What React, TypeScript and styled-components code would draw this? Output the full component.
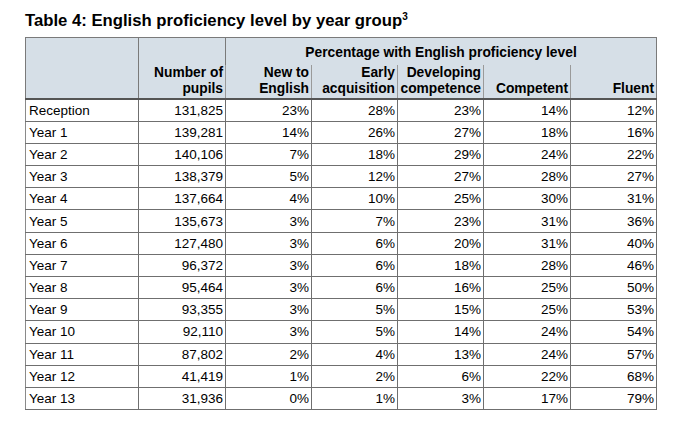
import React from 'react';
import styled, { createGlobalStyle } from 'styled-components';

const GlobalStyle = createGlobalStyle`
  html, body {
    margin: 0;
    padding: 0;
    background: #ffffff;
  }
  body {
    font-family: "Liberation Sans", Arial, sans-serif;
    color: #000;
  }
`;

const Page = styled.div`
  width: 675px;
  height: 430px;
  padding: 11px 0 0 25px;
  box-sizing: border-box;
`;

const Title = styled.h1`
  margin: 0 0 7px 0;
  font-size: 16.7px;
  font-weight: bold;
  line-height: 19px;

  sup {
    font-size: 10px;
    line-height: 0;
    vertical-align: 6px;
  }
`;

const Table = styled.table`
  border-collapse: collapse;
  table-layout: fixed;
  width: 632px;
  font-size: 13.5px;
  border: 1px solid #7a7a7a;
`;

const HeadCell = styled.th<{ $sub?: boolean; $first?: boolean }>`
  background: #d6dfe7;
  font-weight: bold;
  font-size: 13.8px;
  text-align: ${p => (p.$sub ? 'center' : 'right')};
  vertical-align: ${p => (p.$sub ? 'middle' : 'bottom')};
  padding: ${p => (p.$sub ? '3px 2px 0' : '0 2px 2px')};
  line-height: 15.5px;
  border-left: 1px solid ${p => (p.$first ? '#7a7a7a' : '#9a9a9a')};
  border-bottom: 2px solid #555;
  height: ${p => (p.$sub ? '24px' : 'auto')};
`;

const SubHeadRow = styled.tr`
  th {
    border-left: 1px solid #9a9a9a;
  }
`;

const TopHeadCell = styled(HeadCell)`
  border-bottom: none;
`;

const Row = styled.tr`
  height: 22.2px;
`;

const Cell = styled.td<{ $label?: boolean }>`
  padding: 0 2px 0 3px;
  text-align: ${p => (p.$label ? 'left' : 'right')};
  border: 1px solid #6f6f6f;
  border-left-color: #8a8a8a;
  line-height: 15px;
  white-space: nowrap;
`;

const rows: [string, string, string, string, string, string, string][] = [
  ['Reception', '131,825', '23%', '28%', '23%', '14%', '12%'],
  ['Year 1', '139,281', '14%', '26%', '27%', '18%', '16%'],
  ['Year 2', '140,106', '7%', '18%', '29%', '24%', '22%'],
  ['Year 3', '138,379', '5%', '12%', '27%', '28%', '27%'],
  ['Year 4', '137,664', '4%', '10%', '25%', '30%', '31%'],
  ['Year 5', '135,673', '3%', '7%', '23%', '31%', '36%'],
  ['Year 6', '127,480', '3%', '6%', '20%', '31%', '40%'],
  ['Year 7', '96,372', '3%', '6%', '18%', '28%', '46%'],
  ['Year 8', '95,464', '3%', '6%', '16%', '25%', '50%'],
  ['Year 9', '93,355', '3%', '5%', '15%', '25%', '53%'],
  ['Year 10', '92,110', '3%', '5%', '14%', '24%', '54%'],
  ['Year 11', '87,802', '2%', '4%', '13%', '24%', '57%'],
  ['Year 12', '41,419', '1%', '2%', '6%', '22%', '68%'],
  ['Year 13', '31,936', '0%', '1%', '3%', '17%', '79%'],
];

const widths = [113, 87, 86, 86, 86, 87, 86];

export default function App() {
  return (
    <Page>
      <GlobalStyle />
      <Title>
        Table 4: English proficiency level by year group<sup>3</sup>
      </Title>
      <Table>
        <colgroup>
          {widths.map((w, i) => (
            <col key={i} style={{ width: w }} />
          ))}
        </colgroup>
        <thead>
          <tr>
            <HeadCell $first rowSpan={2} />
            <HeadCell $first rowSpan={2}>
              Number of
              <br />
              pupils
            </HeadCell>
            <TopHeadCell $sub $first colSpan={5}>
              Percentage with English proficiency level
            </TopHeadCell>
          </tr>
          <SubHeadRow>
            <HeadCell>
              New to
              <br />
              English
            </HeadCell>
            <HeadCell>
              Early
              <br />
              acquisition
            </HeadCell>
            <HeadCell>
              Developing
              <br />
              competence
            </HeadCell>
            <HeadCell>Competent</HeadCell>
            <HeadCell>Fluent</HeadCell>
          </SubHeadRow>
        </thead>
        <tbody>
          {rows.map(r => (
            <Row key={r[0]}>
              {r.map((v, i) => (
                <Cell key={i} $label={i === 0}>
                  {v}
                </Cell>
              ))}
            </Row>
          ))}
        </tbody>
      </Table>
    </Page>
  );
}
